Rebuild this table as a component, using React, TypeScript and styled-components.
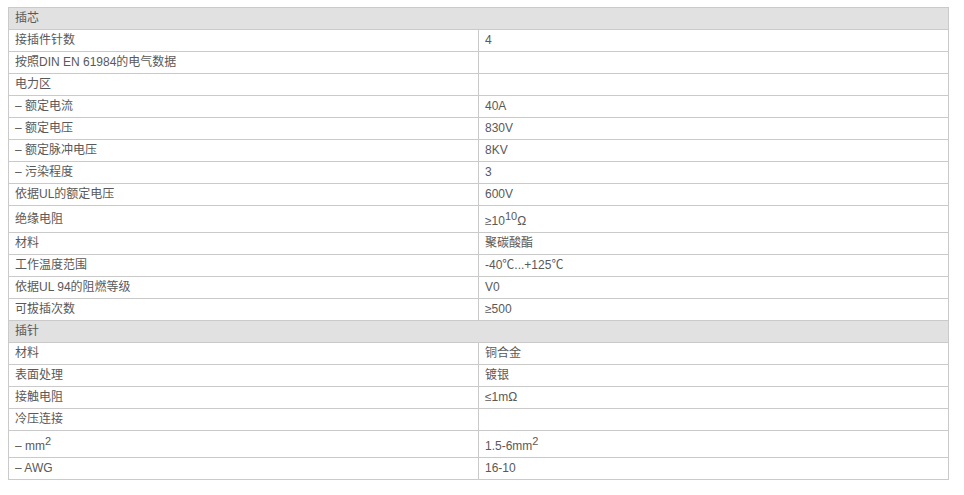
import React from 'react'
import styled, { createGlobalStyle } from 'styled-components'

const GlobalStyle = createGlobalStyle`
	html, body {
		margin: 0;
		padding: 0;
		background: #ffffff;
	}
`

type SpecRow =
	| { kind: 'section'; label: string }
	| { kind: 'item'; label: React.ReactNode; value?: React.ReactNode }

const rows: SpecRow[] = [
	{ kind: 'section', label: '插芯' },
	{ kind: 'item', label: '接插件针数', value: '4' },
	{ kind: 'item', label: '按照DIN EN 61984的电气数据' },
	{ kind: 'item', label: '电力区' },
	{ kind: 'item', label: '– 额定电流', value: '40A' },
	{ kind: 'item', label: '– 额定电压', value: '830V' },
	{ kind: 'item', label: '– 额定脉冲电压', value: '8KV' },
	{ kind: 'item', label: '– 污染程度', value: '3' },
	{ kind: 'item', label: '依据UL的额定电压', value: '600V' },
	{ kind: 'item', label: '绝缘电阻', value: <>≥10<sup>10</sup>Ω</> },
	{ kind: 'item', label: '材料', value: '聚碳酸酯' },
	{ kind: 'item', label: '工作温度范围', value: '-40℃...+125℃' },
	{ kind: 'item', label: '依据UL 94的阻燃等级', value: 'V0' },
	{ kind: 'item', label: '可拔插次数', value: '≥500' },
	{ kind: 'section', label: '插针' },
	{ kind: 'item', label: '材料', value: '铜合金' },
	{ kind: 'item', label: '表面处理', value: '镀银' },
	{ kind: 'item', label: '接触电阻', value: '≤1mΩ' },
	{ kind: 'item', label: '冷压连接' },
	{ kind: 'item', label: <>– mm<sup>2</sup></>, value: <>1.5-6mm<sup>2</sup></> },
	{ kind: 'item', label: '– AWG', value: '16-10' },
]

export default function App() {
	return (
		<Page>
			<GlobalStyle />
			<SpecTable>
				<colgroup>
					<col style={{ width: '470px' }} />
					<col />
				</colgroup>
				<tbody>
					{rows.map((row, i) =>
						row.kind === 'section' ? (
							<tr key={i}>
								<SectionCell colSpan={2}>{row.label}</SectionCell>
							</tr>
						) : (
							<tr key={i}>
								<Cell>{row.label}</Cell>
								<Cell>{row.value}</Cell>
							</tr>
						)
					)}
				</tbody>
			</SpecTable>
		</Page>
	)
}

const Page = styled.div`
	padding: 7px 0 0 8px;
`

const SpecTable = styled.table`
	width: 941px;
	table-layout: fixed;
	border-collapse: collapse;
	border: 1px solid #cacaca;
	font-family: 'Liberation Sans', Arial, 'Noto Sans CJK SC', sans-serif;
	font-size: 12px;
	color: #595959;
`

const Cell = styled.td`
	height: 21px;
	padding: 0 6px;
	line-height: 21px;
	border: 1px solid #cacaca;
	vertical-align: middle;
	white-space: nowrap;

	sup {
		font-size: 11px;
		line-height: 21px;
		vertical-align: 5px;
	}
`

const SectionCell = styled(Cell)`
	background: #e1e1e1;
`
